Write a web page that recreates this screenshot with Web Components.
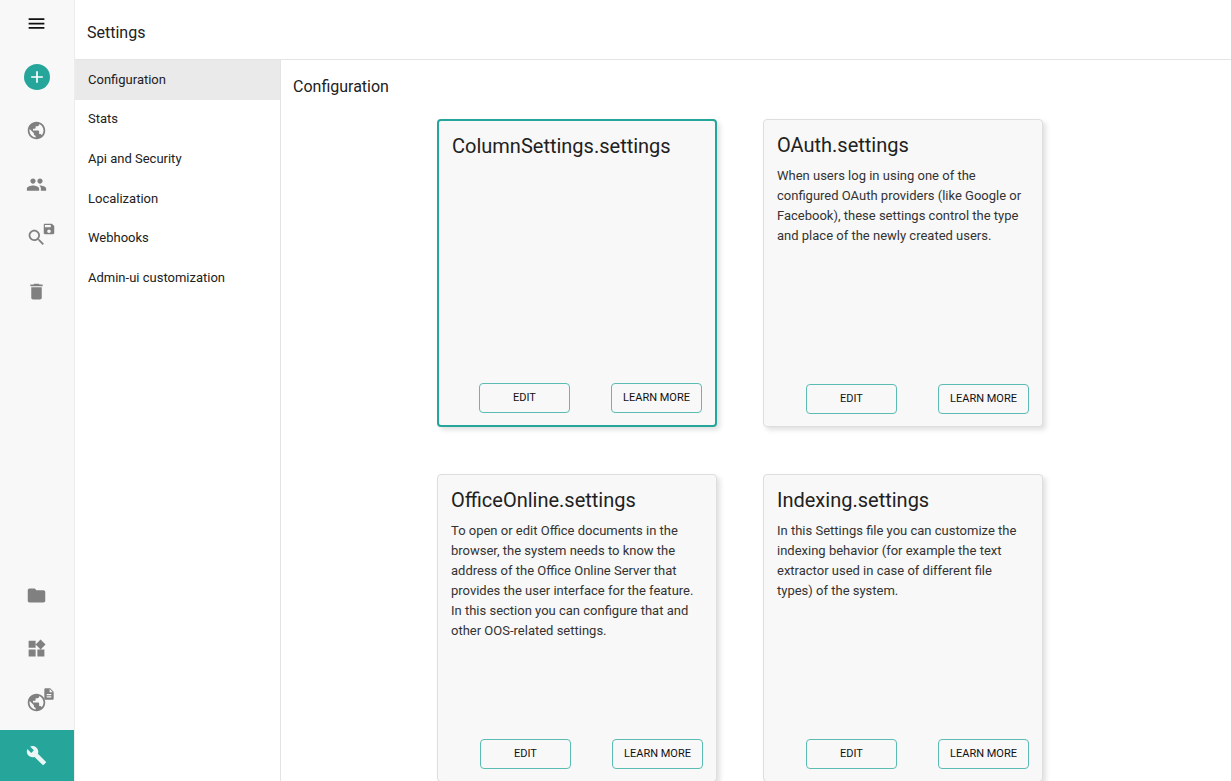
<!DOCTYPE html>
<html lang="en">
<head>
<meta charset="utf-8">
<title>Settings</title>
<style>
  body { margin: 0; font-family: Roboto, "Liberation Sans", sans-serif; color: #212121; background: #fff; }
</style>
</head>
<body>
<settings-app></settings-app>

<script>
const ICONS = {
  menu: 'M3 18h18v-2H3v2zm0-5h18v-2H3v2zm0-7v2h18V6H3z',
  add: 'M19 13h-6v6h-2v-6H5v-2h6V5h2v6h6v2z',
  globe: 'M12 2C6.48 2 2 6.48 2 12s4.48 10 10 10 10-4.48 10-10S17.52 2 12 2zm-1 17.93c-3.95-.49-7-3.85-7-7.93 0-.62.08-1.21.21-1.79L9 15v1c0 1.1.9 2 2 2v1.93zm6.9-2.54c-.26-.81-1-1.39-1.9-1.39h-1v-3c0-.55-.45-1-1-1H8v-2h2c.55 0 1-.45 1-1V7h2c1.1 0 2-.9 2-2v-.41c2.93 1.19 5 4.06 5 7.41 0 2.08-.8 3.97-2.1 5.39z',
  people: 'M16 11c1.66 0 2.99-1.34 2.99-3S17.66 5 16 5c-1.66 0-3 1.34-3 3s1.34 3 3 3zm-8 0c1.66 0 2.99-1.34 2.99-3S9.66 5 8 5C6.34 5 5 6.34 5 8s1.34 3 3 3zm0 2c-2.33 0-7 1.17-7 3.5V19h14v-2.5c0-2.33-4.67-3.5-7-3.5zm8 0c-.29 0-.62.02-.97.05 1.16.84 1.97 1.97 1.97 3.45V19h6v-2.5c0-2.33-4.67-3.5-7-3.5z',
  search: 'M15.5 14h-.79l-.28-.27C15.41 12.59 16 11.11 16 9.5 16 5.91 13.09 3 9.5 3S3 5.91 3 9.5 5.91 16 9.5 16c1.61 0 3.09-.59 4.23-1.57l.27.28v.79l5 4.99L20.49 19l-4.99-5zm-6 0C7.01 14 5 11.99 5 9.5S7.01 5 9.5 5 14 7.01 14 9.5 11.99 14 9.5 14z',
  save: 'M17 3H5c-1.11 0-2 .9-2 2v14c0 1.1.89 2 2 2h14c1.1 0 2-.9 2-2V7l-4-4zm-5 16c-1.66 0-3-1.34-3-3s1.34-3 3-3 3 1.34 3 3-1.34 3-3 3zm3-10H5V5h10v4z',
  trash: 'M6 19c0 1.1.9 2 2 2h8c1.1 0 2-.9 2-2V7H6v12zM19 4h-3.5l-1-1h-5l-1 1H5v2h14V4z',
  folder: 'M10 4H4c-1.1 0-1.99.9-1.99 2L2 18c0 1.1.9 2 2 2h16c1.1 0 2-.9 2-2V8c0-1.1-.9-2-2-2h-8l-2-2z',
  widgets: 'M13 13v8h8v-8h-8zM3 21h8v-8H3v8zM3 3v8h8V3H3zm13.66-1.31L11 7.34 16.66 13l5.66-5.66-5.66-5.65z',
  doc: 'M14 2H6c-1.1 0-1.99.9-1.99 2L4 20c0 1.1.89 2 1.99 2H18c1.1 0 2-.9 2-2V8l-6-6zm2 16H8v-2h8v2zm0-4H8v-2h8v2zm-3-5V3.5L18.5 9H13z',
  wrench: 'M22.7 19l-9.1-9.1c.9-2.3.4-5-1.5-6.9-2-2-5-2.4-7.4-1.3L9 6 6 9 1.6 4.7C.4 7.1.9 10.1 2.9 12.1c1.9 1.9 4.6 2.4 6.9 1.5l9.1 9.1c.4.4 1 .4 1.4 0l2.3-2.3c.5-.4.5-1.1.1-1.4z'
};

const define = (name, html) => customElements.define(name, class extends HTMLElement {
  connectedCallback() {
    if (this.shadowRoot) return;
    this.attachShadow({ mode: 'open' }).innerHTML =
      typeof html === 'function' ? html(this) : html;
  }
});

define('app-icon', el => `
  <style>
    :host { display: block; width: var(--icon-size, 21px); height: var(--icon-size, 21px); }
    svg { display: block; width: 100%; height: 100%; fill: currentColor; }
  </style>
  <svg viewBox="0 0 24 24" aria-hidden="true"><path d="${ICONS[el.getAttribute('name')]}"/></svg>`);

define('rail-button', el => `
  <style>
    :host { display: block; color: #808080; }
    :host([dark]) { color: #111; }
    :host([current]) { color: #e9f6f5; background: #26a69a; }
    button { display: flex; align-items: center; justify-content: center; box-sizing: border-box;
      width: 100%; height: 51px; border: 0; padding: 0 2px 0 0; background: none; color: inherit; cursor: pointer; }
    .glyph { position: relative; }
    .badge { position: absolute; left: 16px; top: -5px; --icon-size: 14px; }
    :host([round]) button { padding: 0; }
    :host([round]) .glyph { padding: 3px; border-radius: 50%; background: #26a69a; color: #fff; --icon-size: 20px; }
  </style>
  <button type="button" aria-label="${el.getAttribute('label')}">
    <span class="glyph"><app-icon name="${el.getAttribute('icon')}"></app-icon>
    ${el.hasAttribute('badge') ? `<app-icon class="badge" name="${el.getAttribute('badge')}"></app-icon>` : ''}</span>
  </button>`);

define('side-rail', `
  <style>
    :host { display: block; background: #f8f8f8; border-right: 1px solid #ececec; }
    nav { height: 100%; display: flex; flex-direction: column; }
    .group { display: flex; flex-direction: column; justify-content: space-between; }
    .main { height: 319px; margin-top: -2px; }
    .extra { height: 211px; margin-top: auto; }
  </style>
  <nav aria-label="Main">
    <div class="group main">
      <rail-button dark icon="menu" label="Menu"></rail-button>
      <rail-button round icon="add" label="Add"></rail-button>
      <rail-button icon="globe" label="Content"></rail-button>
      <rail-button icon="people" label="Users and groups"></rail-button>
      <rail-button icon="search" badge="save" label="Saved queries"></rail-button>
      <rail-button icon="trash" label="Trash"></rail-button>
    </div>
    <div class="group extra">
      <rail-button icon="folder" label="Root"></rail-button>
      <rail-button icon="widgets" label="Content types"></rail-button>
      <rail-button icon="globe" badge="doc" label="Content templates"></rail-button>
      <rail-button current icon="wrench" label="Settings"></rail-button>
    </div>
  </nav>`);

define('menu-link', `
  <style>
    :host { display: block; }
    :host([current]) { background: #eaeaea; }
    a { display: flex; align-items: center; height: 100%; padding-left: 13px; color: inherit;
      text-decoration: none; font-size: 13px; line-height: 20px; }
  </style>
  <a href="#"><slot></slot></a>`);

define('settings-menu', `
  <style>
    :host { display: block; border-right: 1px solid #e4e4e4; }
    nav { display: grid; grid-auto-rows: 1fr; height: 238px; }
  </style>
  <nav aria-label="Settings"><slot></slot></nav>`);

define('outline-button', `
  <style>
    :host { display: block; }
    button { display: block; width: 91px; height: 30px; padding: 0; border: 1px solid #5bbcb3; border-radius: 4px;
      background: none; color: #111; font: 400 11px/18px Roboto, "Liberation Sans", sans-serif;
      text-transform: uppercase; cursor: pointer; }
  </style>
  <button type="button"><slot></slot></button>`);

define('setting-card', `
  <style>
    :host { display: flex; flex-direction: column; box-sizing: border-box; min-height: 308px; padding: 13px 13px 12px;
      border: 1px solid #dedede; border-radius: 4px; background: #f8f8f8; box-shadow: 3px 3px 5px rgba(0,0,0,.12); }
    :host([selected]) { border: 2px solid #26a69a; }
    h2 { margin: 0; font-size: 20px; line-height: 24px; font-weight: 400; }
    p { margin: 9px 0 0; font-size: 13px; line-height: 20px; color: #333; }
    .actions { display: flex; justify-content: flex-end; gap: 41px; margin-top: auto; padding-top: 12px; }
  </style>
  <h2><slot name="title"></slot></h2>
  <p><slot></slot></p>
  <div class="actions">
    <outline-button>Edit</outline-button>
    <outline-button>Learn more</outline-button>
  </div>`);

define('card-grid', `
  <style>
    :host { display: grid; grid-template-columns: repeat(auto-fit, 280px); justify-content: center;
      gap: 47px 46px; max-width: 894px; box-sizing: border-box; }
  </style>
  <slot></slot>`);

define('settings-app', `
  <style>
    :host { display: grid; grid-template-columns: 75px 1fr; height: 100vh; overflow: hidden; }
    .page { display: grid; grid-template: auto 1fr / 206px 1fr; min-height: 0; }
    header { grid-column: 1 / -1; padding: 21px 12px 14px; border-bottom: 1px solid #e4e4e4; }
    h1 { margin: 0; font-size: 16px; line-height: 24px; font-weight: 400; }
    side-rail, .page { height: 100vh; box-sizing: border-box; }
    main { min-width: 0; min-height: 0; overflow: auto; scrollbar-width: none; padding: 15px 44px 47px 12px; }
    card-grid { margin-top: 20px; }
  </style>
  <side-rail></side-rail>
  <div class="page">
    <header><h1>Settings</h1></header>
    <settings-menu>
      <menu-link current>Configuration</menu-link>
      <menu-link>Stats</menu-link>
      <menu-link>Api and Security</menu-link>
      <menu-link>Localization</menu-link>
      <menu-link>Webhooks</menu-link>
      <menu-link>Admin-ui customization</menu-link>
    </settings-menu>
    <main>
      <h1>Configuration</h1>
      <card-grid>
        <setting-card selected><span slot="title">ColumnSettings.settings</span></setting-card>
        <setting-card><span slot="title">OAuth.settings</span>When users log in using one of the configured OAuth providers (like Google or Facebook), these settings control the type and place of the newly created users.</setting-card>
        <setting-card><span slot="title">OfficeOnline.settings</span>To open or edit Office documents in the browser, the system needs to know the address of the Office Online Server that provides the user interface for the feature. In this section you can configure that and other OOS-related settings.</setting-card>
        <setting-card><span slot="title">Indexing.settings</span>In this Settings file you can customize the indexing behavior (for example the text extractor used in case of different file types) of the system.</setting-card>
      </card-grid>
    </main>
  </div>`);
</script>
</body>
</html>
